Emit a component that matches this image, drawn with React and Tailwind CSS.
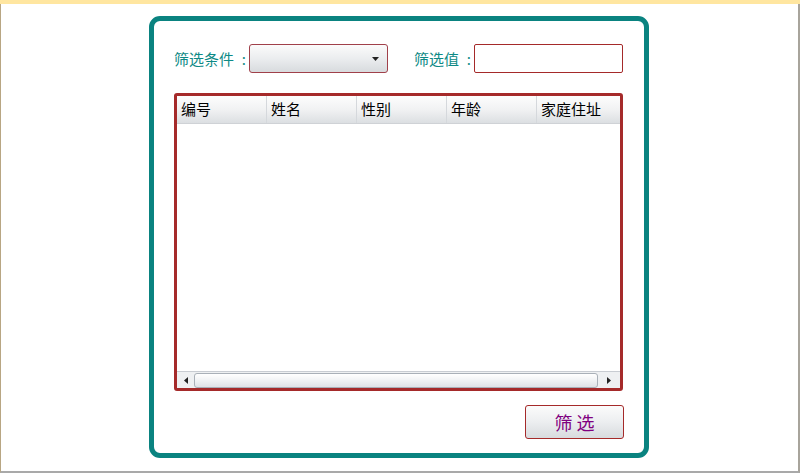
import React from "react";

const cjk = { fontFamily: '"Noto Sans CJK SC", "Noto Sans", sans-serif' };

function HeaderCell({ children, last }) {
  return (
    <div
      className={`flex h-full items-center pl-[4px] text-[15px] text-black ${last ? "flex-1" : "w-[90px] border-r border-[#d5d8dc]"}`}
    >
      {children}
    </div>
  );
}

export default function App() {
  return (
    <div className="flex h-[473px] w-[800px] flex-col bg-white" style={cjk}>
      <div className="h-[4px] w-full bg-[#ffe6a0]" />
      <div className="flex flex-1 border-l border-l-[#b8a683] border-r-2 border-r-[#a8a49c] border-b-2 border-b-[#a9a9a9] pl-[148px] pt-[12px]">
        <div className="flex h-[442px] w-[500px] flex-col rounded-[11px] border-[5px] border-[#0a8380] bg-white px-[20px] pt-[23px]">
          {/* filter row */}
          <div className="flex h-[29px] items-center">
            <span className="flex w-[75px] items-center justify-between pr-[3px] text-[15px] leading-none text-[#0e8a86]">
              <span>筛选条件</span>
              <span>:</span>
            </span>
            <div className="flex h-[29px] w-[139px] items-center justify-end rounded-[3px] border border-[#a0404a] bg-gradient-to-b from-[#fbfbfb] via-[#ebedef] to-[#d8dbde] pr-[8px]">
              <svg width="7" height="4" viewBox="0 0 7 4">
                <path d="M0 0 H7 L3.5 4 Z" fill="#222" />
              </svg>
            </div>
            <span className="ml-[26px] flex w-[60px] items-center justify-between pr-[3px] text-[15px] leading-none text-[#0e8a86]">
              <span>筛选值</span>
              <span>:</span>
            </span>
            <div className="h-[29px] w-[149px] rounded-[2px] border border-[#a52a2a] bg-white" />
          </div>

          {/* grid */}
          <div className="mt-[20px] flex h-[298px] w-[449px] flex-col rounded-[3px] border-[3px] border-[#a52a2a] bg-white">
            <div className="flex h-[28px] border-b border-[#cfd2d6] bg-gradient-to-b from-[#fdfdfd] via-[#f1f2f3] to-[#dcdfe2]">
              <HeaderCell>编号</HeaderCell>
              <HeaderCell>姓名</HeaderCell>
              <HeaderCell>性别</HeaderCell>
              <HeaderCell>年龄</HeaderCell>
              <HeaderCell last>家庭住址</HeaderCell>
            </div>
            <div className="flex-1" />
            <div className="flex h-[17px] items-center border-t border-[#c8ccd2] bg-[#eef0f2]">
              <div className="flex w-[17px] items-center justify-center">
                <svg width="4" height="7" viewBox="0 0 4 7">
                  <path d="M4 0 V7 L0 3.5 Z" fill="#222" />
                </svg>
              </div>
              <div className="h-[15px] flex-1 rounded-[3px] border border-[#a9b0b8] bg-gradient-to-b from-[#ffffff] via-[#f0f2f4] to-[#dfe3e7]" />
              <div className="flex w-[22px] items-center justify-center">
                <svg width="4" height="7" viewBox="0 0 4 7">
                  <path d="M0 0 V7 L4 3.5 Z" fill="#222" />
                </svg>
              </div>
            </div>
          </div>

          {/* button */}
          <div className="mt-[14px] flex justify-end">
            <button className="flex h-[34px] w-[99px] items-center justify-center rounded-[3px] border border-[#a52a2a] bg-gradient-to-b from-[#fbfbfb] via-[#eceef0] to-[#d8dbde] text-[18px] leading-none text-[#800080]">
              筛 选
            </button>
          </div>
        </div>
      </div>
    </div>
  );
}
